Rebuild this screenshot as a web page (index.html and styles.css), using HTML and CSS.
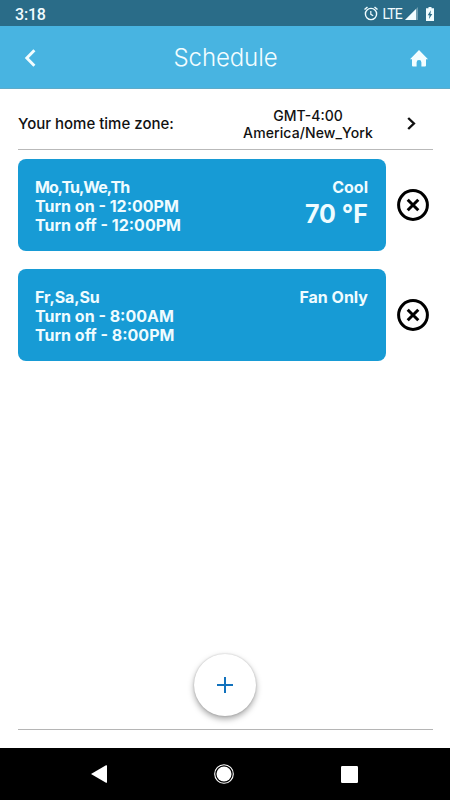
FILE: index.html
```html
<!DOCTYPE html>
<html lang="en">
<head>
    <meta charset="UTF-8">
    <meta name="viewport" content="width=device-width, initial-scale=1.0">
    <title>Schedule</title>
    <link rel="stylesheet" href="styles.css">
</head>
<body>
    <div class="status-bar">
        <span class="clock">3:18</span>
        <div class="status-icons">
            <svg class="alarm" width="14" height="15" viewBox="0 0 14 15" fill="none" stroke="currentColor">
                <circle cx="7" cy="8" r="5.6" stroke-width="1.4"/>
                <path d="M.5 3.5 3.5 1M13.5 3.5 10.5 1" stroke-width="1.5"/>
                <path d="M6.8 4.9v3.4l2.4 1.5" stroke-width="1.2"/>
            </svg>
            <span class="network">LTE</span>
            <svg class="signal" width="13" height="13" viewBox="0 0 13 13" fill="currentColor">
                <path d="M0 13 13 0v13z" opacity=".35"/>
                <path d="M0 13 11 2V13z"/>
            </svg>
            <svg class="battery" width="8" height="14" viewBox="0 0 8 14">
                <path d="M2.5 0h3v1.3H8V14H0V1.3h2.5z" fill="currentColor"/>
                <path d="M4.9 3.3 1.7 8.2h1.8L3 12l3.3-5H4.4z" fill="#2a6c88"/>
            </svg>
        </div>
    </div>

    <header class="header">
        <button class="icon-button" aria-label="Back">
            <svg width="12" height="18" viewBox="0 0 12 18" fill="none" stroke="currentColor" stroke-width="2.9">
                <path d="M10.4 1.2 2.8 9l7.6 7.8"/>
            </svg>
        </button>
        <h1>Schedule</h1>
        <button class="icon-button" aria-label="Home">
            <svg width="18" height="17" viewBox="0 0 18 17" fill="currentColor">
                <path d="M9 0 18 9.2h-2V15.5q0 1-1 1h-3.6v-4.1a2.4 2.4 0 0 0-4.8 0v4.1H3q-1 0-1-1V9.2H0z"/>
            </svg>
        </button>
    </header>

    <main class="content">
        <div class="timezone">
            <span class="timezone-label">Your home time zone:</span>
            <span class="timezone-value">GMT-4:00<br><span class="region">America/New_York</span></span>
            <svg class="chevron" width="9" height="13" viewBox="0 0 9 13" fill="none" stroke="currentColor" stroke-width="2.4">
                <path d="M1.2 1 6.9 6.5 1.2 12"/>
            </svg>
        </div>

        <div class="schedule">
            <div class="card">
                <div class="times">
                    <div class="days">Mo,Tu,We,Th</div>
                    <div>Turn on - 12:00PM</div>
                    <div>Turn off - 12:00PM</div>
                </div>
                <div class="mode">
                    <div>Cool</div>
                    <div class="temp">70 °F</div>
                </div>
            </div>
            <button class="remove" aria-label="Remove">
                <svg width="32" height="32" viewBox="0 0 32 32" fill="none" stroke="currentColor" stroke-width="3">
                    <circle cx="16" cy="16" r="14.4"/>
                    <path d="m10.7 10.7 10.6 10.6m0-10.6L10.7 21.3"/>
                </svg>
            </button>
        </div>

        <div class="schedule">
            <div class="card">
                <div class="times">
                    <div class="days weekend">Fr,Sa,Su</div>
                    <div>Turn on - 8:00AM</div>
                    <div>Turn off - 8:00PM</div>
                </div>
                <div class="mode">
                    <div>Fan Only</div>
                </div>
            </div>
            <button class="remove" aria-label="Remove">
                <svg width="32" height="32" viewBox="0 0 32 32" fill="none" stroke="currentColor" stroke-width="3">
                    <circle cx="16" cy="16" r="14.4"/>
                    <path d="m10.7 10.7 10.6 10.6m0-10.6L10.7 21.3"/>
                </svg>
            </button>
        </div>

        <div class="add-row">
            <button class="add" aria-label="Add schedule">
                <svg width="16" height="16" viewBox="0 0 16 16" stroke="currentColor" stroke-width="2">
                    <path d="M8 0v16M0 8h16"/>
                </svg>
            </button>
        </div>
    </main>

    <nav class="nav-bar">
        <svg width="16" height="18" viewBox="0 0 16 18" fill="currentColor">
            <path d="M0 9 15 .3q1-.5 1 .5v16.4q0 1-1 .5z"/>
        </svg>
        <svg width="20" height="20" viewBox="0 0 20 20">
            <circle cx="10" cy="10" r="9.3" fill="none" stroke="currentColor" stroke-width="1.1"/>
            <circle cx="10" cy="10" r="7.5" fill="currentColor"/>
        </svg>
        <svg width="17" height="17" viewBox="0 0 17 17" fill="currentColor">
            <rect width="17" height="17" rx="1.2"/>
        </svg>
    </nav>
</body>
</html>
```

FILE: styles.css
```css
* {
    box-sizing: border-box;
}

body {
    margin: 0;
    height: 100vh;
    display: flex;
    flex-direction: column;
    font-family: Inter, "Liberation Sans", sans-serif;
    background-color: #fff;
    color: #111;
    overflow: hidden;
}

button {
    border: none;
    padding: 0;
    background: none;
    color: inherit;
    cursor: pointer;
}

svg {
    display: block;
}

.status-bar {
    height: 26px;
    display: flex;
    align-items: center;
    justify-content: space-between;
    padding: 2px 16px 0 15px;
    background-color: #2a6c88;
    color: #f1fcff;
    font-family: Roboto, sans-serif;
}

.clock {
    font-size: 16px;
    font-weight: 500;
    letter-spacing: -0.2px;
}

.status-icons {
    display: flex;
    align-items: center;
    padding-bottom: 1px;
}

.network {
    margin: 0 3px 0 4px;
    font-size: 14px;
    line-height: 16px;
    letter-spacing: -0.8px;
}

.battery {
    margin-left: 8px;
}

.header {
    height: 63px;
    display: flex;
    align-items: center;
    justify-content: space-between;
    padding: 2px 22px 0 24px;
    background-color: #48b4e1;
    border-bottom: 1px solid #5eabc9;
    color: #f3fdff;
}

.header h1 {
    margin: 0 0 0 5px;
    font-size: 24px;
    font-weight: 300;
    line-height: 30px;
    letter-spacing: -0.1px;
}

.content {
    flex: 1;
    display: flex;
    flex-direction: column;
    margin: 0 17px 18px 18px;
    border-bottom: 1px solid #b5b5b5;
}

.timezone {
    height: 61px;
    display: flex;
    align-items: center;
    margin-bottom: 9px;
    padding-top: 9px;
    border-bottom: 1px solid #b9b9b9;
}

.timezone-label {
    width: 200px;
    font-size: 15px;
    font-weight: 500;
}

.timezone-value {
    width: 180px;
    font-size: 14px;
    font-weight: 500;
    line-height: 17px;
    text-align: center;
}

.region {
    letter-spacing: 0.1px;
}

.chevron {
    margin-left: 9px;
}

.schedule {
    display: flex;
    align-items: center;
    margin-bottom: 18px;
}

.card {
    width: 368px;
    height: 92px;
    display: flex;
    justify-content: space-between;
    margin-left: -0.5px;
    padding: 19px 17.5px 17px;
    border-radius: 8px;
    background-color: #179bd5;
    color: #effcff;
    font-size: 16px;
    font-weight: 700;
    line-height: 19.2px;
}

.days {
    letter-spacing: -1px;
}

.weekend {
    letter-spacing: -0.1px;
}

.mode {
    text-align: right;
}

.temp {
    font-size: 25px;
    line-height: 35px;
}

.remove {
    margin-left: 11.5px;
    color: #000;
}

.add-row {
    margin-top: auto;
    padding: 0 2px 13px 0;
    display: flex;
    justify-content: center;
}

.add {
    width: 62px;
    height: 62px;
    display: flex;
    align-items: center;
    justify-content: center;
    border-radius: 50%;
    background-color: #fff;
    box-shadow: 0 3px 6px rgba(0, 0, 0, 0.35), 0 0 2px rgba(0, 0, 0, 0.2);
    color: #1272bd;
}

.nav-bar {
    height: 52px;
    display: flex;
    align-items: center;
    justify-content: space-between;
    padding: 0 92px 0 91px;
    background-color: #000;
    color: #fff;
}
```
